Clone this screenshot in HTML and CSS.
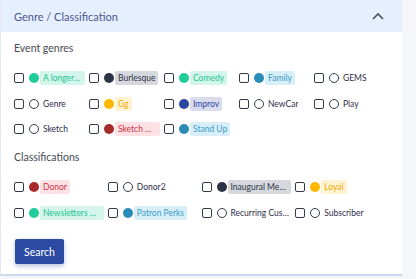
FILE: index.html
```html
<!DOCTYPE html>
<html lang="en">
<head>
    <meta charset="UTF-8">
    <title>Genre / Classification</title>
    <link rel="stylesheet" href="styles.css">
</head>
<body>
    <div class="panel">
        <div class="panel-header">
            <span>Genre / Classification</span>
            <svg class="chevron" width="12" height="8" viewBox="0 0 12 8">
                <path d="M1 7 L6 2 L11 7" fill="none" stroke="#4a5160" stroke-width="1.6"/>
            </svg>
        </div>

        <div class="panel-body">
            <div class="group-title">Event genres</div>
            <div class="options genres">
                <label class="option"><span class="box"></span><span class="dot green"></span><span class="tag green">A longer genre name</span></label>
                <label class="option"><span class="box"></span><span class="dot dark"></span><span class="tag dark">Burlesque</span></label>
                <label class="option"><span class="box"></span><span class="dot green"></span><span class="tag green">Comedy</span></label>
                <label class="option"><span class="box"></span><span class="dot teal"></span><span class="tag teal">Family</span></label>
                <label class="option"><span class="box"></span><span class="dot empty"></span><span class="tag plain">GEMS</span></label>

                <label class="option"><span class="box"></span><span class="dot empty"></span><span class="tag plain">Genre</span></label>
                <label class="option"><span class="box"></span><span class="dot yellow"></span><span class="tag yellow">Gg</span></label>
                <label class="option"><span class="box"></span><span class="dot navy"></span><span class="tag navy">Improv</span></label>
                <label class="option"><span class="box"></span><span class="dot empty"></span><span class="tag plain">NewCar</span></label>
                <label class="option"><span class="box"></span><span class="dot empty"></span><span class="tag plain">Play</span></label>

                <label class="option"><span class="box"></span><span class="dot empty"></span><span class="tag plain">Sketch</span></label>
                <label class="option"><span class="box"></span><span class="dot red"></span><span class="tag red">Sketch Comedy</span></label>
                <label class="option"><span class="box"></span><span class="dot teal"></span><span class="tag teal">Stand Up</span></label>
            </div>

            <div class="group-title">Classifications</div>
            <div class="options classes">
                <label class="option"><span class="box"></span><span class="dot red"></span><span class="tag red">Donor</span></label>
                <label class="option"><span class="box"></span><span class="dot empty"></span><span class="tag plain">Donor2</span></label>
                <label class="option"><span class="box"></span><span class="dot dark"></span><span class="tag dark">Inaugural Members</span></label>
                <label class="option"><span class="box"></span><span class="dot yellow"></span><span class="tag yellow">Loyal</span></label>

                <label class="option"><span class="box"></span><span class="dot green"></span><span class="tag green">Newsletters Signup</span></label>
                <label class="option"><span class="box"></span><span class="dot teal"></span><span class="tag teal">Patron Perks</span></label>
                <label class="option"><span class="box"></span><span class="dot empty"></span><span class="tag plain">Recurring Customers</span></label>
                <label class="option"><span class="box"></span><span class="dot empty"></span><span class="tag plain">Subscriber</span></label>
            </div>

            <button class="search-btn">Search</button>
        </div>
    </div>
</body>
</html>
```

FILE: styles.css
```css
body {
    margin: 0;
    background-color: #f5f6fa;
    font-family: Lato, "Noto Sans", Arial, sans-serif;
    color: #2d3546;
}

.panel {
    width: 401px;
    background-color: #ffffff;
    border-left: 1px solid #e4e8f2;
    border-bottom: 2px solid #ccd6ee;
}

.panel-header {
    height: 32px;
    padding: 0 18px 0 13px;
    background-color: #e6effd;
    display: flex;
    align-items: center;
    justify-content: space-between;
    font-size: 11px;
    color: #4b5890;
}

.panel-body {
    padding: 9px 13px 10px 13px;
}

.group-title {
    font-size: 10.5px;
    line-height: 14px;
    color: #444a55;
    margin-bottom: 16px;
}

.options {
    display: grid;
    width: 375px;
    row-gap: 11.5px;
    margin-bottom: 14px;
}

.genres {
    grid-template-columns: repeat(5, 75px);
}

.classes {
    grid-template-columns: repeat(4, 93.75px);
    row-gap: 12px;
    margin-bottom: 19px;
}

.option {
    display: flex;
    align-items: center;
    height: 14px;
    min-width: 0;
    overflow: hidden;
}

.box {
    flex: none;
    width: 8px;
    height: 8px;
    border: 1.6px solid #333b4a;
    border-radius: 2px;
    margin-right: 5px;
}

.dot {
    flex: none;
    width: 10px;
    height: 10px;
    border-radius: 50%;
    margin-right: 1px;
    box-sizing: border-box;
}

.dot.empty {
    border: 1.3px solid #333b4a;
    margin-right: 4px;
}

.tag {
    font-size: 8.5px;
    line-height: 14px;
    padding: 0 3px;
    border-radius: 2px;
    white-space: nowrap;
    overflow: hidden;
    text-overflow: ellipsis;
    min-width: 0;
    margin-right: 4px;
}

.tag.plain {
    padding: 0;
    color: #2f2c48;
}

.dot.green { background-color: #1fcc9a; }
.tag.green { background-color: #d3f5ea; color: #1fc596; }

.dot.dark { background-color: #2c3445; }
.tag.dark { background-color: #d6d8dd; color: #2c3445; }

.dot.teal { background-color: #2a8db7; }
.tag.teal { background-color: #d8eef8; color: #3a9dc6; }

.dot.yellow { background-color: #ffb800; }
.tag.yellow { background-color: #fff3d2; color: #f2a900; }

.dot.navy { background-color: #2b47a0; }
.tag.navy { background-color: #dadcee; color: #2b47a0; }

.dot.red { background-color: #a82a2a; }
.tag.red { background-color: #fde1e4; color: #d33344; }

.search-btn {
    display: block;
    width: 49px;
    height: 25px;
    margin-left: 1px;
    border: none;
    border-radius: 2px;
    background-color: #2b4ba2;
    color: #ffffff;
    font-family: Lato, "Noto Sans", Arial, sans-serif;
    font-size: 10.5px;
    padding: 0;
    box-shadow: 0 2px 5px rgba(43, 75, 162, 0.35);
}
```
